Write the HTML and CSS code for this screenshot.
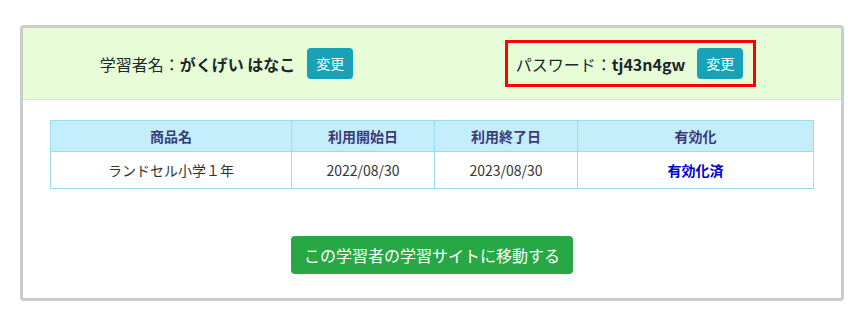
FILE: index.html
```html
<!DOCTYPE html>
<html lang="ja">
<head>
  <meta charset="UTF-8">
  <title>学習者情報</title>
  <link rel="stylesheet" href="styles.css">
</head>
<body>

  <div class="tarjeta">
    <div class="cabecera">
      <div class="cabecera-col">
        <span class="etiqueta">学習者名：</span><strong class="valor">がくげい はなこ</strong>
        <button class="btn-cambio">変更</button>
      </div>
      <div class="cabecera-col">
        <div class="marca">
          <span class="etiqueta">パスワード：</span><strong class="valor">tj43n4gw</strong>
          <button class="btn-cambio">変更</button>
        </div>
      </div>
    </div>

    <div class="cuerpo">
      <table class="tabla">
        <thead>
          <tr>
            <th class="col-producto">商品名</th>
            <th class="col-fecha">利用開始日</th>
            <th class="col-fecha">利用終了日</th>
            <th>有効化</th>
          </tr>
        </thead>
        <tbody>
          <tr>
            <td>ランドセル小学１年</td>
            <td>2022/08/30</td>
            <td>2023/08/30</td>
            <td class="activo">有効化済</td>
          </tr>
        </tbody>
      </table>

      <div class="acciones">
        <button class="btn-sitio">この学習者の学習サイトに移動する</button>
      </div>
    </div>
  </div>

</body>
</html>
```

FILE: styles.css
```css
body {
  margin: 0;
  padding: 25px 16px 0 20px;
  background: #fff;
  color: #212529;
  font-family: "Noto Sans CJK JP", "Noto Sans", sans-serif;
  font-size: 16px;
}

.tarjeta {
  width: 818px;
  border: 3px solid #cccccc;
  border-radius: 4px;
}

.cabecera {
  display: flex;
  height: 71px;
  background-color: #e7fdd8;
  border-bottom: 1px solid #dcdcdc;
}

.cabecera-col {
  flex: 1;
  display: flex;
  align-items: center;
  justify-content: center;
}

.cabecera-col:first-child {
  padding-right: 4px;
}

.marca {
  display: flex;
  align-items: center;
  height: 41px;
  padding: 0 10px 0 8px;
  border: 3px solid #ff0000;
  margin-left: -14px;
}

.etiqueta {
  line-height: 24px;
}

.valor {
  font-weight: bold;
  line-height: 24px;
}

.btn-cambio {
  margin-left: 12px;
  height: 31px;
  padding: 0 9px;
  border: none;
  border-radius: 4px;
  background-color: #17a2b8;
  color: #fff;
  font-family: inherit;
  font-size: 14px;
  line-height: 31px;
}

.cuerpo {
  padding: 20px 27px 24px;
}

.tabla {
  width: 764px;
  border-collapse: collapse;
  table-layout: fixed;
  font-size: 14px;
}

.tabla th,
.tabla td {
  border: 1px solid #98dcef;
  text-align: center;
  padding: 0;
}

.tabla th {
  height: 30px;
  background-color: #c5eefc;
  color: #3b3b78;
  font-weight: bold;
}

.tabla td {
  height: 36px;
  color: #333;
}

.col-producto {
  width: 240px;
}

.col-fecha {
  width: 142px;
}

.tabla td.activo {
  color: #0000cc;
  font-weight: bold;
}

.acciones {
  display: flex;
  justify-content: center;
  margin-top: 47px;
}

.btn-sitio {
  height: 38px;
  padding: 0 13px;
  border: none;
  border-radius: 4px;
  background-color: #28a745;
  color: #fff;
  font-family: inherit;
  font-size: 16px;
  line-height: 38px;
}
```
